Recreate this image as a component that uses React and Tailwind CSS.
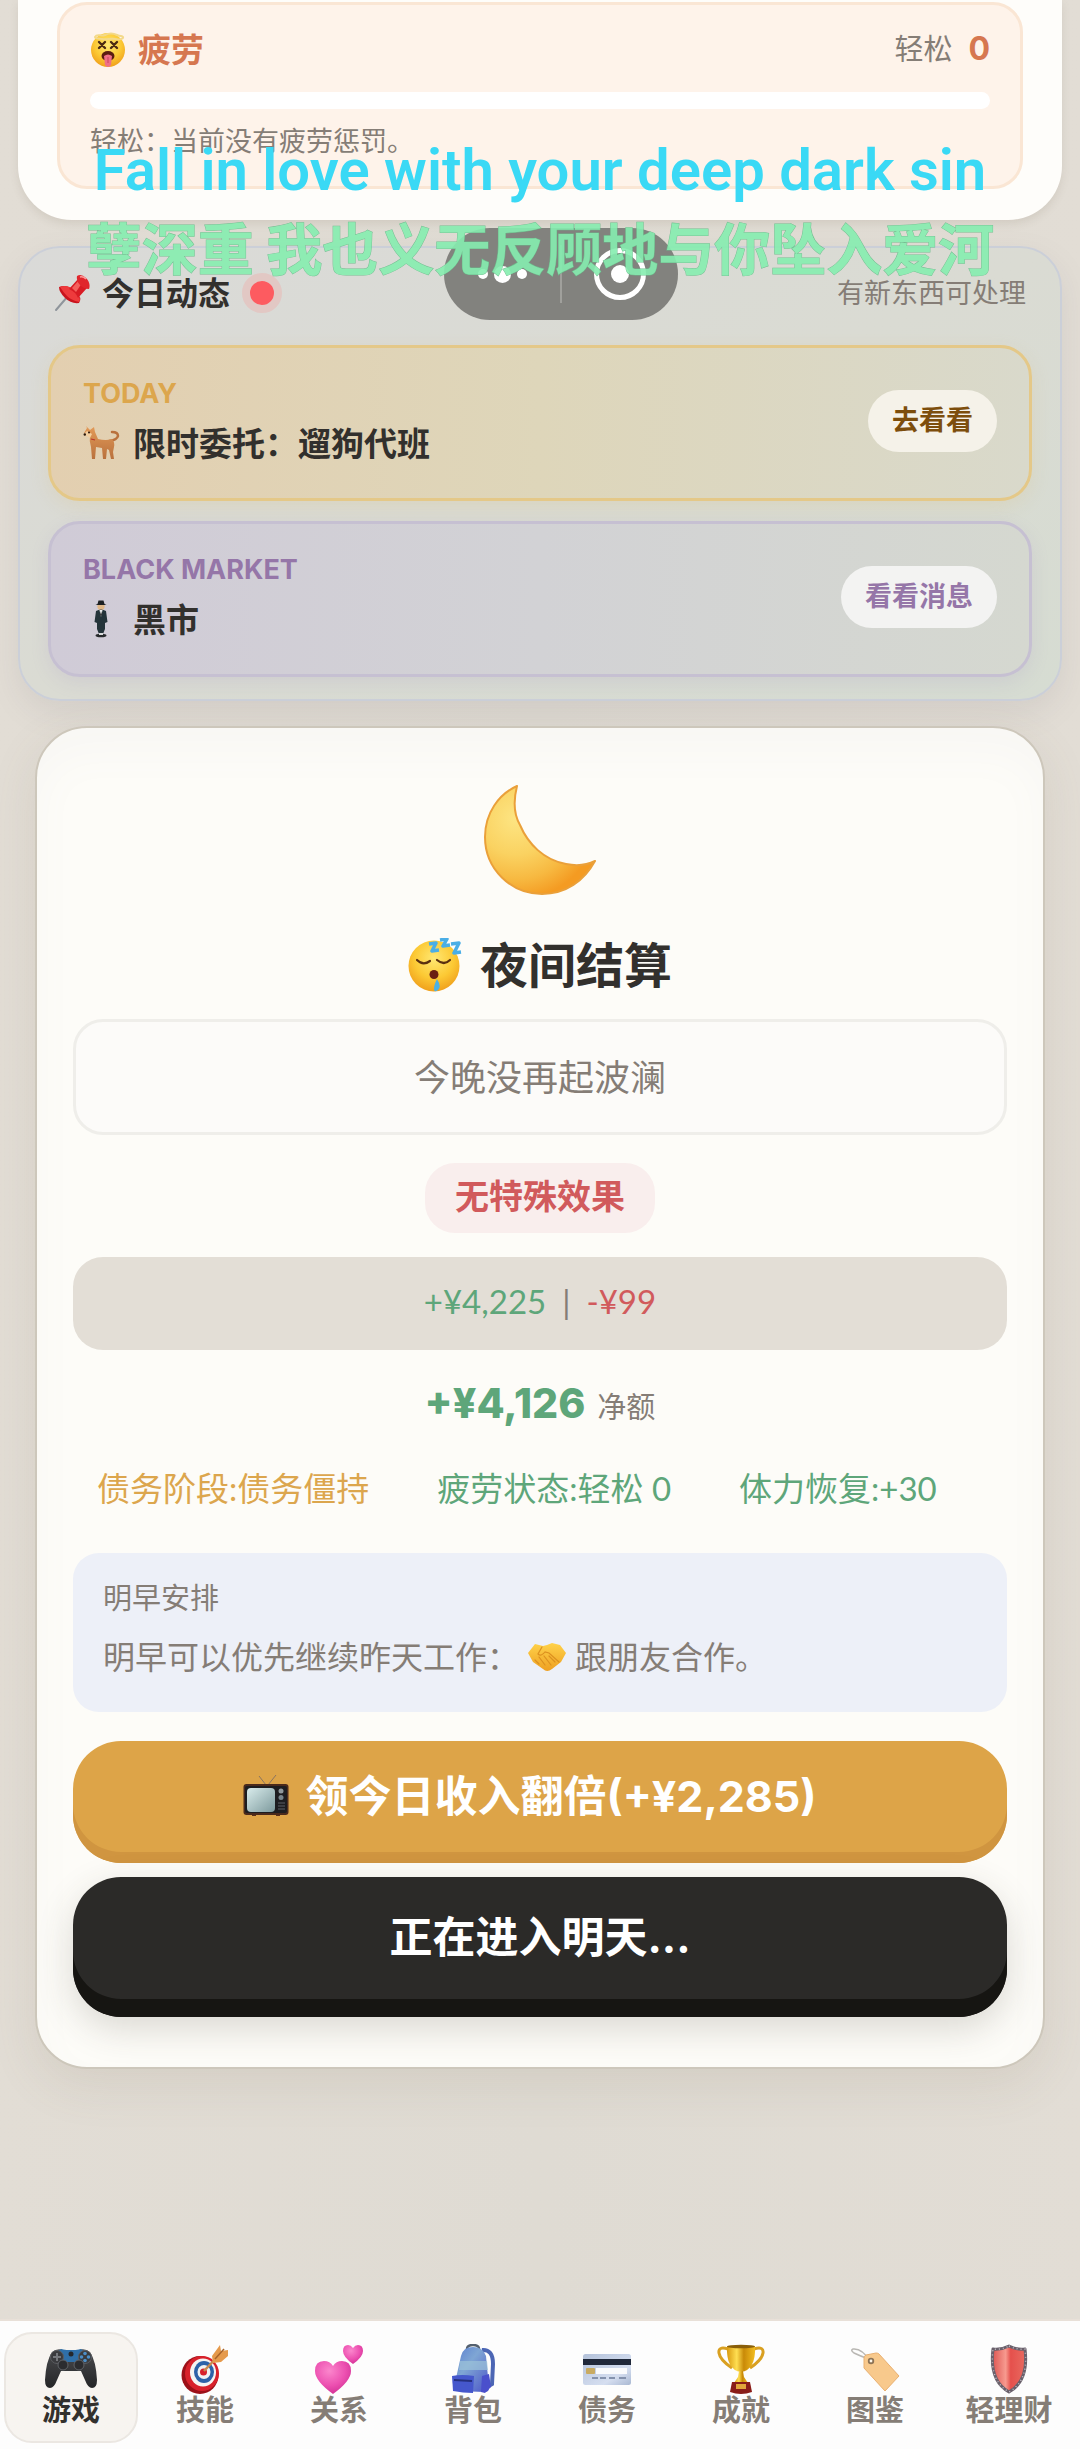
const Defs = () => (
  <svg width="0" height="0" className="absolute" aria-hidden="true">
    <defs>
      <radialGradient id="face" cx="0.5" cy="0.35" r="0.65">
        <stop offset="0" stopColor="#ffe873" />
        <stop offset="0.6" stopColor="#fcc934" />
        <stop offset="1" stopColor="#f0a01c" />
      </radialGradient>
      <radialGradient id="moon" cx="0.28" cy="0.3" r="0.75">
        <stop offset="0" stopColor="#fde583" />
        <stop offset="0.45" stopColor="#fad261" />
        <stop offset="0.75" stopColor="#f7b941" />
        <stop offset="1" stopColor="#f49b22" />
      </radialGradient>
      <linearGradient id="fur" x1="0" y1="0" x2="0" y2="1">
        <stop offset="0" stopColor="#e39a58" />
        <stop offset="1" stopColor="#b9713d" />
      </linearGradient>
      <linearGradient id="skin" x1="0" y1="0" x2="0" y2="1">
        <stop offset="0" stopColor="#ffd24a" />
        <stop offset="1" stopColor="#eea022" />
      </linearGradient>
      <linearGradient id="screen" x1="0" y1="0" x2="1" y2="1">
        <stop offset="0" stopColor="#d9ecec" />
        <stop offset="1" stopColor="#7d9a9d" />
      </linearGradient>
      <radialGradient id="pink" cx="0.4" cy="0.3" r="0.75">
        <stop offset="0" stopColor="#fb86cc" />
        <stop offset="0.6" stopColor="#ec4fb0" />
        <stop offset="1" stopColor="#cf2f93" />
      </radialGradient>
      <linearGradient id="bag" x1="0" y1="0" x2="1" y2="1">
        <stop offset="0" stopColor="#5a7ed0" />
        <stop offset="0.4" stopColor="#7fa6d4" />
        <stop offset="1" stopColor="#4a53c8" />
      </linearGradient>
      <linearGradient id="card" x1="0" y1="0" x2="1" y2="1">
        <stop offset="0" stopColor="#b4c2da" />
        <stop offset="0.7" stopColor="#d5def0" />
        <stop offset="1" stopColor="#a9b8d2" />
      </linearGradient>
      <linearGradient id="gold" x1="0" y1="0" x2="1" y2="0">
        <stop offset="0" stopColor="#d99a10" />
        <stop offset="0.35" stopColor="#ffdf52" />
        <stop offset="0.6" stopColor="#c98a08" />
        <stop offset="1" stopColor="#f2bd20" />
      </linearGradient>
      <linearGradient id="shield" x1="0" y1="0" x2="1" y2="0">
        <stop offset="0" stopColor="#dd5552" />
        <stop offset="0.4" stopColor="#f79a8f" />
        <stop offset="0.55" stopColor="#e5504c" />
        <stop offset="1" stopColor="#e86a60" />
      </linearGradient>
      <linearGradient id="pad" x1="0" y1="0" x2="0" y2="1">
        <stop offset="0" stopColor="#4b4c4f" />
        <stop offset="1" stopColor="#242527" />
      </linearGradient>
    </defs>
  </svg>
);

const DizzyIcon = () => (
  <svg viewBox="0 0 36 38" className="h-[38px] w-9 shrink-0" aria-hidden="true">
    <circle cx="18" cy="20" r="17" fill="url(#face)" />
    <path d="M5 7c2-4 6 0 10-2s8-2 12 0 5 0 6 2-4 3-8 2-9 1-13 0-7 0-7-2z" fill="none" stroke="#f3d98a" strokeWidth="2" />
    <path d="M9 12l6 6m0-6l-6 6M21 12l6 6m0-6l-6 6" stroke="#4c2a12" strokeWidth="2.400" strokeLinecap="round" />
    <ellipse cx="18" cy="26" rx="6.500" ry="5" fill="#5b1d10" />
    <path d="M14 26q4-3 8 0l-1 9q-3 4-6 0z" fill="#ef6f86" />
    <path d="M18 27v6" stroke="#c9475f" strokeWidth="1" />
  </svg>
);

const PinIcon = () => (
  <svg viewBox="0 0 36 38" className="h-[38px] w-9 shrink-0" aria-hidden="true">
    <path d="M14 22L2 36" stroke="#8f959b" strokeWidth="2" strokeLinecap="round" />
    <path d="M5 13q8-3 16 4t4 12q-8 1-14-5T5 13z" fill="#c9131c" />
    <path d="M6 13q8-3 15 4t4 11q-8-2-12-6T6 13z" fill="#ee3a3c" />
    <path d="M15 15l9-10 9 9-9 10q-2-6-9-9z" fill="#d81c24" />
    <path d="M18 14l7-8 3 3-6 9z" fill="#f4605c" />
    <path d="M23 2q4-3 9 2t3 11q-5 0-9-4t-3-9z" fill="#e0262c" />
    <path d="M26 3q3-1 6 2" stroke="#f99" strokeWidth="1.500" fill="none" />
  </svg>
);

const DogIcon = () => (
  <svg viewBox="0 0 38 36" className="h-9 w-[38px] shrink-0" aria-hidden="true">
    <path d="M26 16q8-1 9-5 0-4-6-4" fill="none" stroke="#b9713d" strokeWidth="2.500" strokeLinecap="round" />
    <path d="M3 1l4 4 4-3 1 5 3 7q8 2 14 0 3 3 2 8l-1 5 1 7h-3l-2-9-2-1-1 10h-3l-1-11-6-1-1 12h-3l-1-12q-2-6-1-11l-6-3 3-5z" fill="url(#fur)" />
    <path d="M1 9l3-3 5 3-2 4z" fill="#f3cfa0" />
    <circle cx="6" cy="7.500" r="1" fill="#2a170b" />
    <circle cx="1.800" cy="9.500" r="1.200" fill="#2a170b" />
    <path d="M8 14l4 1" stroke="#b8322a" strokeWidth="1.200" />
  </svg>
);

const SuitIcon = () => (
  <svg viewBox="0 0 38 38" className="h-[38px] w-[38px] shrink-0" aria-hidden="true">
    <circle cx="18" cy="6.500" r="3.600" fill="#e0b888" />
    <path d="M12.500 5h11l-2-1-1-3.500h-5L14.500 4z" fill="#1d2124" />
    <path d="M13 11q5-3 10 0l1.500 11-2.500 1v6l-2 5h-4l-2-5v-6l-2.500-1z" fill="#24343a" />
    <path d="M16.500 10h3L18 17z" fill="#eef1f1" />
    <path d="M18 11l-.8 4 .8 1 .8-1z" fill="#1b1b1b" />
    <ellipse cx="18" cy="35.500" rx="5.500" ry="1.800" fill="#26292b" />
    <path d="M16 33h4v2h-4z" fill="#d9dcdc" />
  </svg>
);

const MoonIcon = () => (
  <svg viewBox="0 0 112 110" className="mx-auto h-[110px] w-28" aria-hidden="true">
    <path
      d="M33 1C15 9 1 28 1 52c0 32 26 57 57 57 24 0 42-13 53-33-8 4-19 5-29 3C60 75 44 59 36 40 29 28 30 13 33 1z"
      fill="url(#moon)"
      stroke="#eaa03a"
      strokeWidth="2"
      strokeLinejoin="round"
    />
  </svg>
);

const SleepIcon = () => (
  <svg viewBox="0 0 54 54" className="h-[54px] w-[54px] shrink-0" aria-hidden="true">
    <circle cx="26" cy="28" r="25.500" fill="url(#face)" />
    <path d="M9 22q6 6 13 1M29 22q7 6 13 0" fill="none" stroke="#5a3010" strokeWidth="2.200" strokeLinecap="round" />
    <ellipse cx="26" cy="36.500" rx="4.500" ry="4.500" fill="#6b2012" />
    <path d="M29 41q5 8 1 11t-4-1 3-10z" fill="#4ab1e6" />
    <path
      d="M21 6l7-1-4 8 7-1M32 2l7-1-4 7 7-1M43 6l8-1-5 10 7-1"
      fill="none"
      stroke="#4aaee6"
      strokeWidth="3.500"
      strokeLinejoin="round"
    />
  </svg>
);

const HandshakeIcon = () => (
  <svg viewBox="0 0 40 30" className="h-[30px] w-10 shrink-0" aria-hidden="true">
    <path d="M1 11L8 2l8 2 4-1 5-2 8 2 6 8-5 9-9 7q-5 4-9 0L6 20z" fill="url(#skin)" />
    <path d="M15 5l-4 7q3 3 7-2l4 1 10 9M8 18l4 4M12 15l6 8M17 14l7 9M22 14l6 6" fill="none" stroke="#dc901f" strokeWidth="1.200" strokeLinecap="round" />
  </svg>
);

const TvIcon = () => (
  <svg viewBox="0 0 46 42" className="h-[42px] w-[46px] shrink-0" aria-hidden="true">
    <path d="M23 10L16 1M25 10L33 0" stroke="#8a7460" strokeWidth="1" />
    <path d="M9 38h4v3H9zM33 38h4v3h-4z" fill="#5a2e18" />
    <rect x="0.500" y="9" width="45" height="31" rx="3" fill="#4a2a1c" />
    <rect x="2" y="11" width="42" height="27" rx="2" fill="#1d1d20" />
    <rect x="4" y="13" width="28" height="24" rx="4" fill="url(#screen)" />
    <circle cx="38" cy="16" r="2.500" fill="#8f989c" />
    <circle cx="38" cy="22.500" r="2.500" fill="#77838a" />
    <path d="M35 28h7M35 31h7M35 34h7" stroke="#5c6066" strokeWidth="1.200" />
  </svg>
);

const GamepadIcon = () => (
  <svg viewBox="0 0 54 50" className="h-[50px] w-[54px]" aria-hidden="true">
    <path d="M8 8q5-4 11-2l3 2h10l3-2q6-2 11 2 6 9 7 28 0 8-5 8-4 0-7-8l-4-9H17l-4 9q-3 8-7 8-5 0-5-8 1-19 7-28z" fill="url(#pad)" />
    <path d="M17 5q5 1 6 1h8q1 0 6-1l3 2-6 11H20L14 7z" fill="#2f6fa8" />
    <circle cx="13" cy="13" r="6.500" fill="#3a3b3e" stroke="#5b5d61" strokeWidth="1" />
    <circle cx="41" cy="13" r="6.500" fill="#3a3b3e" stroke="#5b5d61" strokeWidth="1" />
    <path d="M13 9v8M9 13h8" stroke="#75787d" strokeWidth="2" />
    <g fill="#4c8ec6">
      <circle cx="41" cy="9.500" r="1.800" />
      <circle cx="41" cy="16.500" r="1.800" />
      <circle cx="37.500" cy="13" r="1.800" />
      <circle cx="44.500" cy="13" r="1.800" />
    </g>
    <circle cx="27" cy="10" r="2.500" fill="#25272a" />
    <circle cx="19" cy="21" r="5" fill="#2b2c2f" stroke="#606368" strokeWidth="1" />
    <circle cx="35" cy="21" r="5" fill="#2b2c2f" stroke="#606368" strokeWidth="1" />
  </svg>
);

const TargetIcon = () => (
  <svg viewBox="0 0 50 50" className="h-[50px] w-[50px]" aria-hidden="true">
    <ellipse cx="20" cy="31" rx="18.500" ry="19" fill="#9c1018" />
    <ellipse cx="22" cy="29.500" rx="17" ry="17.500" fill="#d8212b" />
    <ellipse cx="23" cy="28.500" rx="13" ry="14" fill="#f6f4f2" />
    <ellipse cx="24" cy="28" rx="10" ry="11" fill="#2d62a8" />
    <ellipse cx="24" cy="28" rx="6.500" ry="7" fill="#f2f2f2" />
    <circle cx="23.500" cy="28" r="3.500" fill="#d8212b" />
    <path d="M24 27l16-17" stroke="#c98a4e" strokeWidth="2.500" />
    <path d="M32 12l8-11 1 6 7-1v6l-7 6-8 1z" fill="#e59a4c" />
    <path d="M35 15l9-10" stroke="#a8642b" strokeWidth="1.500" />
  </svg>
);

const HeartsIcon = () => (
  <svg viewBox="0 0 50 50" className="h-[50px] w-[50px]" aria-hidden="true">
    <path d="M19 50Q1 37 1 27q0-10 9-10 6 0 9 5 3-5 9-5 9 0 9 10 0 10-18 23z" fill="url(#pink)" />
    <path d="M39 20Q29 13 29 7q0-6 5-6 3 0 5 3 2-3 5-3 5 0 5 6 0 6-10 13z" fill="url(#pink)" />
  </svg>
);

const BackpackIcon = () => (
  <svg viewBox="0 0 50 50" className="h-[50px] w-[50px]" aria-hidden="true">
    <path d="M34 6q11-1 11 14l-1 20-5 3" fill="none" stroke="#4c66b4" strokeWidth="4" />
    <path d="M19 5q0-4 6-4t6 4" fill="none" stroke="#54606e" strokeWidth="2.500" />
    <path d="M13 12Q15 3 25 3t13 9l3 32q0 4-4 4l-28-1q-3 0-3-4z" fill="url(#bag)" />
    <path d="M12 17h27l1 9H11z" fill="#9cc3d8" opacity="0.700" />
    <path d="M4 32q10-2 22 0l-1 17q-10 0-20-2z" fill="#4557cc" />
    <path d="M6 36l18 1" stroke="#25307e" strokeWidth="2" />
    <path d="M34 32l7-2 2 13-6 6-4-1z" fill="#4a50cc" />
  </svg>
);

const CreditCardIcon = () => (
  <svg viewBox="0 0 50 50" className="h-[50px] w-[50px]" aria-hidden="true">
    <rect x="1" y="10" width="48" height="31" rx="2.500" fill="url(#card)" />
    <path d="M1 15h48v6H1z" fill="#20283a" />
    <path d="M14 24h31v6H14z" fill="#fafbfd" />
    <rect x="4" y="24" width="9" height="6" rx="1" fill="#c9ab62" />
    <path d="M10 34h6M18 34h6M27 34h6M37 34h7" stroke="#8492ad" strokeWidth="2" />
  </svg>
);

const TrophyIcon = () => (
  <svg viewBox="0 0 50 50" className="h-[50px] w-[50px]" aria-hidden="true">
    <path d="M12 5Q2 2 3 9t13 15M38 5q10-3 9 4T34 24" fill="none" stroke="#d9a021" strokeWidth="3" />
    <path d="M11 2h28q1 24-14 26Q10 26 11 2z" fill="url(#gold)" />
    <ellipse cx="25" cy="2.500" rx="14" ry="1.800" fill="#8a5f0a" />
    <path d="M23 27h4l1 6 4 6H18l4-6z" fill="url(#gold)" />
    <path d="M16 38h18l2 10q-11 4-22 0z" fill="#8a1d18" />
    <path d="M20 40h10v5H20z" fill="#e2a53a" />
  </svg>
);

const TagIcon = () => (
  <svg viewBox="0 0 50 50" className="h-[50px] w-[50px]" aria-hidden="true">
    <path d="M20 17Q12 4 3 5q-3 1 1 4 6 3 15 6" fill="none" stroke="#b9b7b3" strokeWidth="1.500" />
    <path d="M14 14q0-2 2-3l10-2q2 0 3 1l20 22-14 15L14 24z" fill="#f8c98c" stroke="#e9b070" strokeWidth="1" strokeLinejoin="round" />
    <circle cx="21" cy="17" r="3.200" fill="#8d7355" />
    <circle cx="21" cy="17" r="1.400" fill="#fdf6ea" />
  </svg>
);

const ShieldIcon = () => (
  <svg viewBox="0 0 50 50" className="h-[50px] w-[50px]" aria-hidden="true">
    <path d="M25 2q8 4 16 3 4 32-16 43Q5 37 9 5q8 1 16-3z" fill="url(#shield)" stroke="#69606b" strokeWidth="3" strokeLinejoin="round" />
    <path d="M25 2q8 4 16 3 4 32-16 43Q5 37 9 5q8 1 16-3z" fill="none" stroke="#c3bcc4" strokeWidth="1.500" strokeDasharray="1 3" />
  </svg>
);

const tabs = [
  { label: "游戏", Icon: GamepadIcon, active: true },
  { label: "技能", Icon: TargetIcon },
  { label: "关系", Icon: HeartsIcon },
  { label: "背包", Icon: BackpackIcon },
  { label: "债务", Icon: CreditCardIcon },
  { label: "成就", Icon: TrophyIcon },
  { label: "图鉴", Icon: TagIcon },
  { label: "轻理财", Icon: ShieldIcon },
];

function FatigueCard() {
  return (
    <section className="rounded-b-[54px] bg-[#fefdfa] px-[39px] pt-[2px] pb-[31px] shadow-[0_4px_8px_rgba(120,105,85,0.14)]">
      <div className="rounded-[30px] border-[3px] border-[#fae6d4] bg-[#fef3ea] px-[30px] pt-6 pb-[29px]">
        <div className="flex h-10 items-center justify-between">
          <h2 className="flex items-center gap-3 text-[33px] leading-10 font-bold text-[#d67750]">
            <DizzyIcon />
            疲劳
          </h2>
          <p className="flex items-center gap-4 text-[29px] text-[#857d76]">
            轻松 <b className="font-['Inter',sans-serif] text-[32px] text-[#d67750]">0</b>
          </p>
        </div>
        <div className="mt-[23px] h-[17px] rounded-full bg-white" />
        <p className="mt-4 text-[27px] leading-8 text-[#857d76]">轻松：当前没有疲劳惩罚。</p>
      </div>
    </section>
  );
}

function NewsPanel() {
  return (
    <section className="mt-[26px] rounded-[42px] border-2 border-[#cbcfd8] bg-linear-to-br from-[#dadad8] via-[#dadbd3] to-[#d6dcd2] px-7 pt-[25px] pb-[22px] shadow-[0_12px_30px_rgba(130,120,130,0.14)]">
      <div className="flex h-10 items-center justify-between px-1.5">
        <h2 className="flex items-center gap-3 text-[32px] leading-10 font-bold text-[#32302d]">
          <PinIcon />
          今日动态
          <span className="h-10 w-10 rounded-full border-8 border-[#e2c8c4] bg-[#fd5b60]" />
        </h2>
        <p className="text-[27px] text-[#857d76]">有新东西可处理</p>
      </div>

      <div className="mt-8 flex flex-col gap-5">
        <article className="flex items-center justify-between rounded-[32px] border-[3px] border-[#e4c888] bg-linear-to-r from-[#e3cfb0] via-[#ded6ba] to-[#d9d9cb] pt-[30px] pr-8 pb-[35px] pl-8 shadow-[0_6px_18px_rgba(220,190,120,0.2)]">
          <div>
            <p className="font-['Inter',sans-serif] text-[27px] leading-8 font-bold text-[#dca64d]">TODAY</p>
            <h3 className="mt-[13px] flex items-center gap-3 text-[33px] leading-10 font-bold text-[#32302d]">
              <DogIcon />
              限时委托：遛狗代班
            </h3>
          </div>
          <button className="h-[62px] rounded-full bg-[#f5f2e9] px-6 text-[27px] font-bold text-[#7d4e0c]">
            去看看
          </button>
        </article>

        <article className="flex items-center justify-between rounded-[32px] border-[3px] border-[#c6c0d2] bg-linear-to-r from-[#d0cbd7] via-[#d2d2d5] to-[#d5d8d0] pt-[30px] pr-8 pb-[35px] pl-8 shadow-[0_6px_18px_rgba(150,130,190,0.14)]">
          <div>
            <p className="font-['Inter',sans-serif] text-[27px] leading-8 font-bold text-[#9576a8]">BLACK MARKET</p>
            <h3 className="mt-[13px] flex items-center gap-3 text-[33px] leading-10 font-bold text-[#32302d]">
              <SuitIcon />
              黑市
            </h3>
          </div>
          <button className="h-[62px] rounded-full bg-[#f3f3f2] px-6 text-[27px] font-bold text-[#9576a8]">
            看看消息
          </button>
        </article>
      </div>
    </section>
  );
}

function NightCard() {
  return (
    <section className="mx-[17px] mt-[25px] rounded-[52px] border-2 border-[#cdc7bb] bg-[#fdfcf8] px-9 pt-[57px] pb-[50px] text-center shadow-[0_16px_48px_rgba(120,105,85,0.12),inset_0_24px_40px_rgba(140,140,150,0.04)]">
      <MoonIcon />
      <h1 className="mt-[38px] flex items-center justify-center gap-[18px] text-[48px] leading-[64px] font-bold text-[#32302d]">
        <SleepIcon />
        夜间结算
      </h1>
      <p className="mt-[22px] rounded-[30px] border-[3px] border-[#efeeea] bg-[#fcfbf9] py-[31px] text-[36px] leading-[48px] text-[#857d76]">
        今晚没再起波澜
      </p>
      <p className="mx-auto mt-7 w-fit rounded-[30px] bg-[#f9eeed] px-[30px] pt-[9px] pb-[13px] text-[34px] leading-[48px] font-bold text-[#d15a5c]">
        无特殊效果
      </p>
      <p className="mt-6 rounded-[30px] bg-[#e3ded6] pt-5 pb-[25px] text-[33px] leading-[48px] text-[#857d76]">
        <span className="text-[#5ea67a]">+¥4,225</span>
        <span className="mx-4">|</span>
        <span className="text-[#d15a5c]">-¥99</span>
      </p>
      <p className="mt-[25px] flex h-14 items-baseline justify-center gap-3 text-[29px] text-[#857d76]">
        <b className="font-['Inter',sans-serif] text-[41px] leading-[56px] font-extrabold text-[#5ea67a]">+¥4,126</b>
        净额
      </p>
      <div className="mt-[37px] flex gap-[68px] px-6 text-[33px] leading-10 whitespace-nowrap text-[#5ea67a]">
        <span className="text-[#dca64d]">债务阶段:债务僵持</span>
        <span>疲劳状态:轻松 0</span>
        <span>体力恢复:+30</span>
      </div>
      <div className="mt-[45px] rounded-[26px] bg-[#edf0f8] px-[30px] pt-7 pb-[35px] text-left text-[#857d76]">
        <p className="text-[29px] leading-[34px]">明早安排</p>
        <p className="mt-[22px] flex items-center text-[32px] leading-10">
          明早可以优先继续昨天工作：
          <span className="mx-2">
            <HandshakeIcon />
          </span>
          跟朋友合作。
        </p>
      </div>
      <button className="mt-[29px] flex h-[122px] w-full items-center justify-center gap-4 rounded-[48px] bg-[#dda448] pr-5 pb-3 font-['Inter','Noto_Sans_CJK_SC',sans-serif] text-[43px] font-bold text-white shadow-[inset_0_-11px_0_#d09540]">
        <TvIcon />
        领今日收入翻倍(+¥2,285)
      </button>
      <button className="mt-[14px] flex h-[140px] w-full items-center justify-center rounded-[48px] bg-[#2b2a28] pb-5 font-['Inter','Noto_Sans_CJK_SC',sans-serif] text-[43px] font-bold text-white shadow-[inset_0_-18px_0_#161512,0_12px_36px_rgba(60,55,45,0.18)]">
        正在进入明天...
      </button>
    </section>
  );
}

function Capsule() {
  return (
    <div className="absolute top-[228px] left-1/2 ml-[-96px] flex h-[92px] w-[234px] items-center rounded-full bg-[#82827e]">
      <button aria-label="更多" className="flex flex-1 items-center justify-center gap-1.5 text-white">
        <span className="h-2.5 w-2.5 rounded-full bg-white" />
        <span className="h-[17px] w-[17px] rounded-full bg-white" />
        <span className="h-2.5 w-2.5 rounded-full bg-white" />
      </button>
      <span className="h-[58px] w-[2px] bg-[#a0a09c]" />
      <button aria-label="关闭" className="flex flex-1 items-center justify-center">
        <span className="flex h-[52px] w-[52px] items-center justify-center rounded-full border-[5px] border-white">
          <span className="h-[18px] w-[18px] rounded-full bg-white" />
        </span>
      </button>
    </div>
  );
}

function Lyrics() {
  return (
    <div className="pointer-events-none absolute inset-x-0 top-[134px] text-center whitespace-nowrap">
      <p className="font-['Roboto','Noto_Sans_CJK_SC',sans-serif] text-[58px] leading-[72px] font-semibold text-[#3ad9f5]">
        Fall in love with your deep dark sin
      </p>
      <p className="mt-1 font-['Noto_Sans_CJK_SC',sans-serif] text-[56px] leading-[72px] font-bold text-[#86eeb0] opacity-90 [-webkit-text-stroke:1px_#6cbd8c] [paint-order:stroke_fill]">
        孽深重 我也义无反顾地与你坠入爱河
      </p>
    </div>
  );
}

function TabBar() {
  return (
    <nav className="grid grid-cols-8 border-t-2 border-[#e8e0d8] bg-[#fdfdfd] px-1 pt-[11px] pb-1.5">
      {tabs.map(({ label, Icon, active }) => (
        <button
          key={label}
          className={`flex h-[111px] flex-col items-center rounded-[28px] border-2 pt-2.5 text-[29px] leading-8 font-bold ${
            active ? "border-[#ebe7e2] bg-[#f7f4f0] text-[#32302d]" : "border-transparent text-[#857d76]"
          }`}
        >
          <Icon />
          <span className="whitespace-nowrap">{label}</span>
        </button>
      ))}
    </nav>
  );
}

export default function App() {
  return (
    <div className="relative flex min-h-screen flex-col bg-linear-to-r from-[#e2ddd5] via-[#dfdbd3] to-[#e2ddd5] font-['Lato','Noto_Sans_CJK_SC',sans-serif]">
      <Defs />
      <main className="flex-1 px-[18px]">
        <FatigueCard />
        <NewsPanel />
        <NightCard />
      </main>
      <TabBar />
      <Capsule />
      <Lyrics />
    </div>
  );
}
